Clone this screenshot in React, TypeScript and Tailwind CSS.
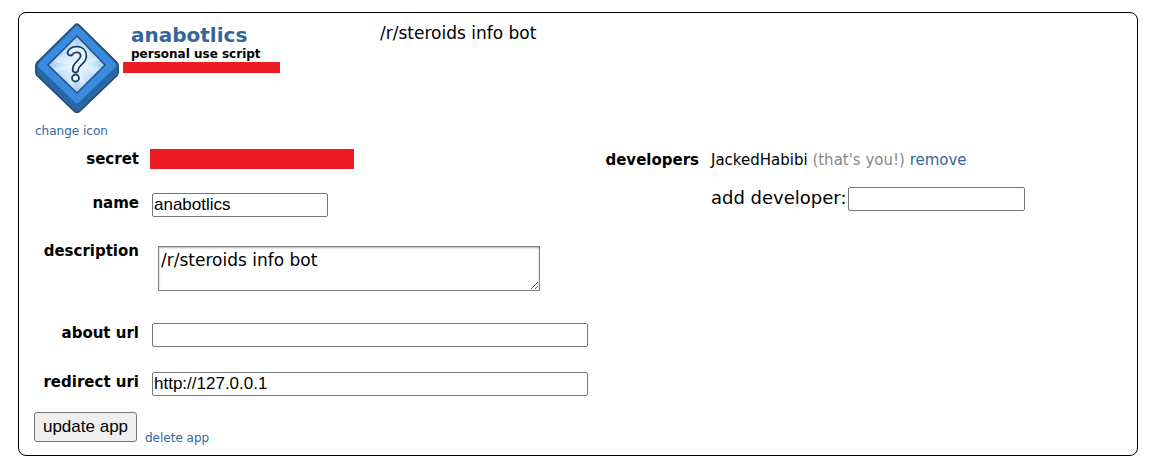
import type { ReactNode } from "react";

const inputClass =
  "h-6 rounded-[2px] border border-[#767676] bg-white px-px font-['Liberation_Sans',Arial,sans-serif] text-[17px] text-black";
const linkClass = "text-[#369] hover:underline";

function AppIcon() {
  return (
    <svg viewBox="0 0 84 90" className="h-[90px] w-[84px]" role="img" aria-label="App icon">
      <defs>
        <radialGradient id="glow" gradientUnits="userSpaceOnUse" cx="42" cy="42" r="29">
          <stop offset="0" stopColor="#f4fbff" />
          <stop offset="0.5" stopColor="#cfe7fb" />
          <stop offset="1" stopColor="#9ac8f2" />
        </radialGradient>
        <clipPath id="face">
          <path d="M42 13 70 42 42 70 13 42Z" />
        </clipPath>
      </defs>
      <path
        d="M40 2Q42 0.3 44 2L82 39.5Q83.3 41 83.2 43V49Q83.2 51 82 52.5L44.5 88.5Q42 90.5 39.5 88.5L2 52.5Q0.8 51 0.8 49V43Q0.8 41 2 39.5Z"
        fill="#2966a6"
        stroke="#26486d"
        strokeWidth="1.5"
      />
      <path d="M41 3Q42 2.2 43 3L80.5 40.5Q82 42 80.5 44L44 79.5Q42 81 40 79.5L3.5 44Q2 42 3.5 40.5Z" fill="#3a8ae0" />
      <path d="M42 13 70 42 42 70 13 42Z" fill="url(#glow)" />
      <g clipPath="url(#face)" fill="#fff" opacity="0.3">
        <path d="M42 42 32 8 40 8ZM42 42 50 8 58 16ZM42 42 72 28 74 36ZM42 42 74 46 70 56ZM42 42 56 72 48 74ZM42 42 36 74 28 68ZM42 42 10 54 8 46ZM42 42 8 38 14 28Z" />
      </g>
      <path d="M42 13 70 42 42 70 13 42Z" fill="none" stroke="#24507f" strokeWidth="1.5" />
      <g fill="none" strokeLinecap="round" strokeLinejoin="round">
        <path d="M35.5 29.5C38 25.500 48.500 24.500 48.500 33C48.500 39.500 40.500 40 40.500 46.500" stroke="#173e63" strokeWidth="7.5" />
        <path d="M35.5 29.5C38 25.500 48.500 24.500 48.500 33C48.500 39.500 40.500 40 40.500 46.500" stroke="#e8f5ff" strokeWidth="4" />
      </g>
      <circle cx="40.5" cy="55" r="3.5" fill="#e8f5ff" stroke="#173e63" strokeWidth="1.8" />
    </svg>
  );
}

function Row({ label, htmlFor, children }: { label: string; htmlFor?: string; children: ReactNode }) {
  return (
    <div className="flex items-start">
      <div className="w-[105px] shrink-0 text-right text-[15px] leading-5 font-bold">
        {htmlFor ? <label htmlFor={htmlFor}>{label}</label> : label}
      </div>
      <div className="flex min-w-0 grow pl-[13px]">{children}</div>
    </div>
  );
}

export default function App() {
  return (
    <main className="bg-white pt-3 pr-[11px] pb-1.5 pl-[18px] font-['DejaVu_Sans',Verdana,sans-serif] text-black">
      <section className="rounded-lg border border-black px-[15px] pt-2.5 pb-2">
        <header className="flex items-start">
          <div className="w-[89px] shrink-0 pl-px">
            <AppIcon />
            <a href="#icon" className={`mt-[9px] block text-xs leading-[18px] ${linkClass}`}>
              change icon
            </a>
          </div>
          <div className="w-[257px] shrink-0">
            <h2 className="pl-2 text-xl leading-6 font-bold">
              <a href="#app" className={linkClass}>
                anabotlics
              </a>
            </h2>
            <h3 className="pl-2 text-xs leading-[15px] font-bold">personal use script</h3>
            <div className="h-[11px] w-[157px] bg-[#ed1c24]" />
          </div>
          <p className="text-[17px] leading-5">/r/steroids info bot</p>
        </header>

        <form className="mt-[9px]" onSubmit={(e) => e.preventDefault()}>
          <div className="flex items-start">
            <div className="flex w-[555px] shrink-0 flex-col">
              <div className="mb-6">
                <Row label="secret">
                  <div className="-ml-0.5 h-5 w-[204px] bg-[#ed1c24]" />
                </Row>
              </div>
              <div className="mb-6">
                <Row label="name" htmlFor="name">
                  <input id="name" type="text" defaultValue="anabotlics" className={`w-44 ${inputClass}`} />
                </Row>
              </div>
              <div className="mb-8">
                <Row label="description" htmlFor="description">
                  <textarea
                    id="description"
                    defaultValue="/r/steroids info bot"
                    className="mt-[5px] ml-1.5 h-[45px] w-[382px] resize border border-[#808080] bg-white px-0.5 py-[3px] text-[17px] leading-5 shadow-[inset_0_1px_2px_rgba(0,0,0,0.3)]"
                  />
                </Row>
              </div>
              <div className="mb-[25px]">
                <Row label="about url" htmlFor="about">
                  <input id="about" type="text" className={`w-[436px] ${inputClass}`} />
                </Row>
              </div>
              <Row label="redirect uri" htmlFor="redirect">
                <input id="redirect" type="text" defaultValue="http://127.0.0.1" className={`w-[436px] ${inputClass}`} />
              </Row>
            </div>

            <div className="flex min-w-0 grow items-start">
              <div className="w-[110px] shrink-0 text-right text-[15px] leading-[22px] font-bold">developers</div>
              <div className="pl-3 whitespace-nowrap">
                <div className="text-[15px] leading-[22px]">
                  JackedHabibi <span className="text-[#888]">(that's you!)</span>{" "}
                  <a href="#remove" className={linkClass}>
                    remove
                  </a>
                </div>
                <div className="mt-4 flex items-start">
                  <label htmlFor="developer" className="text-lg leading-[22px]">
                    add developer:
                  </label>
                  <input id="developer" type="text" className={`ml-px w-[177px] ${inputClass}`} />
                </div>
              </div>
            </div>
          </div>

          <div className="mt-4 flex items-start">
            <button
              type="submit"
              className="h-[30px] w-[103px] rounded-[3px] border border-[#767676] bg-[#efefef] font-['Liberation_Sans',Arial,sans-serif] text-[17px] leading-6"
            >
              update app
            </button>
            <a href="#delete" className={`mt-[17px] ml-2 text-xs leading-[18px] ${linkClass}`}>
              delete app
            </a>
          </div>
        </form>
      </section>
    </main>
  );
}
